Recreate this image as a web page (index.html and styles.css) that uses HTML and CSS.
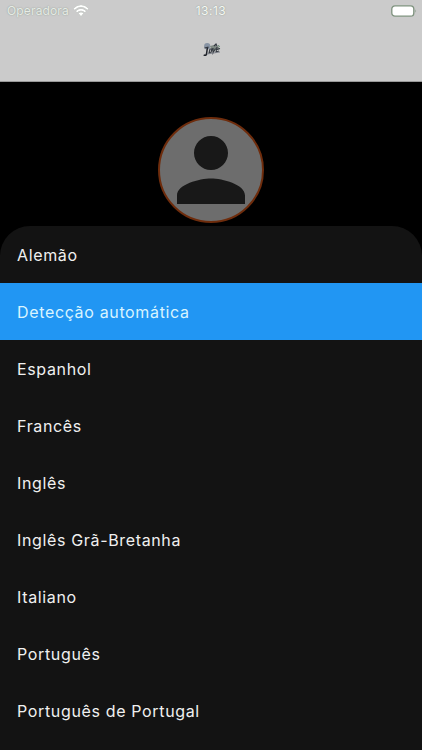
FILE: index.html
```
<!DOCTYPE html>
<html lang="pt">
<head>
<meta charset="utf-8">
<title>Idioma</title>
<link rel="stylesheet" href="styles.css">
</head>
<body>
<div class="screen">
  <header class="header">
    <div class="status">
      <div class="carrier"><span class="carrier-name">Operadora</span>
        <svg class="wifi" width="16" height="12" viewBox="0 0 16 12"><path d="M1 4.2Q8-2 15 4.2M3.4 6.8Q8 2.8 12.6 6.8" fill="none" stroke="#fff" stroke-width="1.9"/><path d="M5.3 8.3Q8 6.3 10.7 8.3L8 11.2Z" fill="#fff"/></svg>
      </div>
      <span class="time">13:13</span>
      <svg class="battery" width="26" height="12" viewBox="0 0 26 12"><rect x=".8" y=".8" width="22" height="10.4" rx="3.2" fill="#fff" stroke="#7e927e" stroke-width="1.3"/><path d="M24.3 4.2Q26 6 24.3 7.8Z" fill="#8fa08f"/></svg>
    </div>
    <svg class="logo" width="20" height="16" viewBox="0 0 20 16">
      <circle cx="5.2" cy="4.2" r="3.1" fill="#8793a3"/>
      <path d="M8 4l4-1 4 1 2 3-8 2z" fill="#7f8983"/>
      <path d="M5.5 5L4.5 12Q4 14 1.7 13" fill="none" stroke="#20232b" stroke-width="1.5"/>
      <path d="M2.5 6l4-1M8 7l-1 4 2-.5 1-3.5zM11 6v5l2.5-4.5M15 5l-1 5 3-1M15 7.5l3-1M12 4l2-2 1 2" fill="none" stroke="#343941" stroke-width="1.1"/>
      <path d="M5 12l13-2" stroke="#747983" stroke-width=".8"/>
      <path d="M16.2 3.5l1.5 1" stroke="#477557" stroke-width="1"/>
    </svg>
  </header>
  <div class="profile">
    <div class="avatar"><svg width="102" height="102" viewBox="0 0 24 24"><path fill="#181818" d="M12 12c2.21 0 4-1.79 4-4s-1.79-4-4-4-4 1.79-4 4 1.79 4 4 4zm0 2c-2.67 0-8 1.34-8 4v2h16v-2c0-2.66-5.33-4-8-4z"/></svg></div>
  </div>
  <ul class="sheet">
    <li>Alemão</li>
    <li class="selected">Detecção automática</li>
    <li>Espanhol</li>
    <li>Francês</li>
    <li>Inglês</li>
    <li>Inglês Grã-Bretanha</li>
    <li>Italiano</li>
    <li>Português</li>
    <li>Português de Portugal</li>
  </ul>
</div>
</body>
</html>
```
FILE: styles.css
```
* { box-sizing: border-box; }
body { margin: 0; background: #000; font-family: Inter, "Liberation Sans", sans-serif; }
.screen { height: 750px; overflow: hidden; display: flex; flex-direction: column; background: #000; }
.header { height: 82px; flex: none; background: #cbcbcb; border-bottom: 1px solid #999; display: flex; flex-direction: column; align-items: center; }
.status { width: 100%; height: 21px; padding: 0 5px 0 7px; display: grid; grid-template-columns: 1fr auto 1fr; align-items: center; color: #f5f8f5; font-size: 12px; text-shadow: 0 0 1.5px #819181; }
.carrier { display: flex; align-items: center; gap: 4px; }
.carrier-name { color: #e6ebe6; letter-spacing: .15px; }
.wifi { filter: drop-shadow(0 0 .5px #819181); }
.time { letter-spacing: .5px; margin-right: 2px; }
.battery { justify-self: end; }
.logo { margin: 21px 0 0 2px; }
.profile { height: 144px; flex: none; padding-top: 35px; display: flex; justify-content: center; }
.avatar { width: 106px; height: 106px; flex: none; border: 2px solid #6e2c0c; border-radius: 50%; background: #6d6d6d; }
.avatar svg { display: block; }
.sheet { flex: 1; margin: 0; padding: 0; list-style: none; overflow: hidden; border-radius: 30px 30px 0 0; background: #131313; }
.sheet li { height: 57px; padding: 1px 17px 0; line-height: 57px; font-size: 16px; letter-spacing: .65px; color: #f0f0f0; }
.sheet li:first-child { height: 57.4px; }
.sheet .selected { background: #2196f3; color: #d9f4ff; }
```
